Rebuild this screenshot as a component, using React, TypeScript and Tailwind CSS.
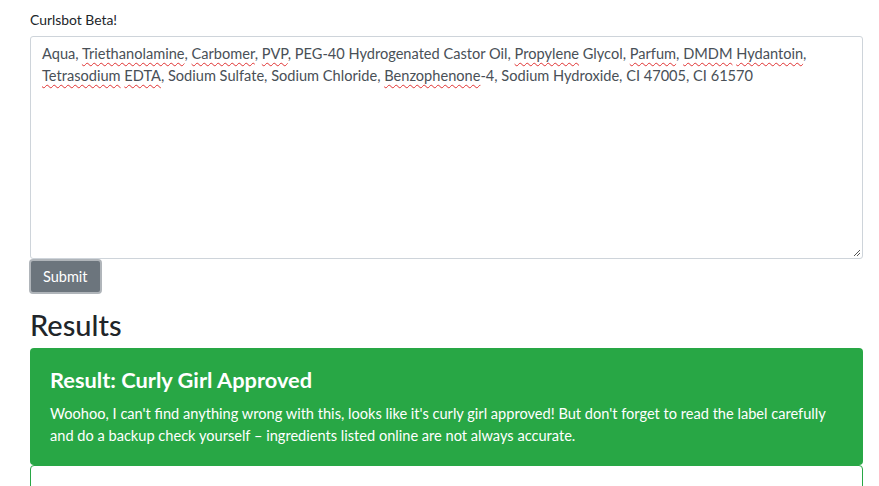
const font = { fontFamily: 'Lato, "Noto Sans", sans-serif' }

function Misspelled({ children }: { children: React.ReactNode }) {
  return (
    <span className="underline decoration-wavy decoration-[#e03131] decoration-1 underline-offset-[3px]">
      {children}
    </span>
  )
}

export default function App() {
  return (
    <div className="min-h-screen bg-white text-[#212529]" style={font}>
      <div className="ml-[30px] pt-[10px] w-[833px]">
        <p className="text-[13.9px] leading-[20px] mb-[6px]">Curlsbot Beta!</p>

        {/* Ingredient box */}
        <div className="relative h-[223px] border border-[#ced4da] rounded-[3px] px-[11px] py-[6px] text-[14.6px] leading-[22px] text-[#495057]">
          Aqua, <Misspelled>Triethanolamine</Misspelled>, <Misspelled>Carbomer</Misspelled>, <Misspelled>PVP</Misspelled>, PEG-40 Hydrogenated Castor Oil,{' '}
          <Misspelled>Propylene</Misspelled> Glycol, <Misspelled>Parfum</Misspelled>, <Misspelled>DMDM</Misspelled> <Misspelled>Hydantoin</Misspelled>,{' '}
          <Misspelled>Tetrasodium</Misspelled> <Misspelled>EDTA</Misspelled>, Sodium Sulfate, Sodium Chloride, <Misspelled>Benzophenone</Misspelled>-4, Sodium Hydroxide, CI 47005, CI 61570
          <svg className="absolute right-[1px] bottom-[1px]" width="9" height="9" viewBox="0 0 9 9">
            <path d="M8 2 L2 8 M8 5 L5 8" stroke="#555" strokeWidth="1" />
          </svg>
        </div>

        <button
          type="button"
          className="ml-[-1px] h-[35px] px-[12px] rounded-[4px] bg-[#6c757d] text-white text-[14.5px] border-2 border-[#b0b5ba]"
        >
          Submit
        </button>

        <h2 className="mt-[14px] text-[29px] leading-[34px] font-medium">Results</h2>

        <div className="mt-[6px] rounded-[4px] bg-[#28a745] text-white px-[20px] pt-[18px] pb-[18px]">
          <h4 className="text-[21.8px] leading-[28px] font-bold mb-[9px]">Result: Curly Girl Approved</h4>
          <p className="text-[14.6px] leading-[22px]">
            Woohoo, I can't find anything wrong with this, looks like it's curly girl approved! But don't forget to read the label carefully and do a backup check yourself – ingredients listed online are not always accurate.
          </p>
        </div>

        <div className="h-[40px] border border-[#28a745] rounded-t-[4px]" />
      </div>
    </div>
  )
}
